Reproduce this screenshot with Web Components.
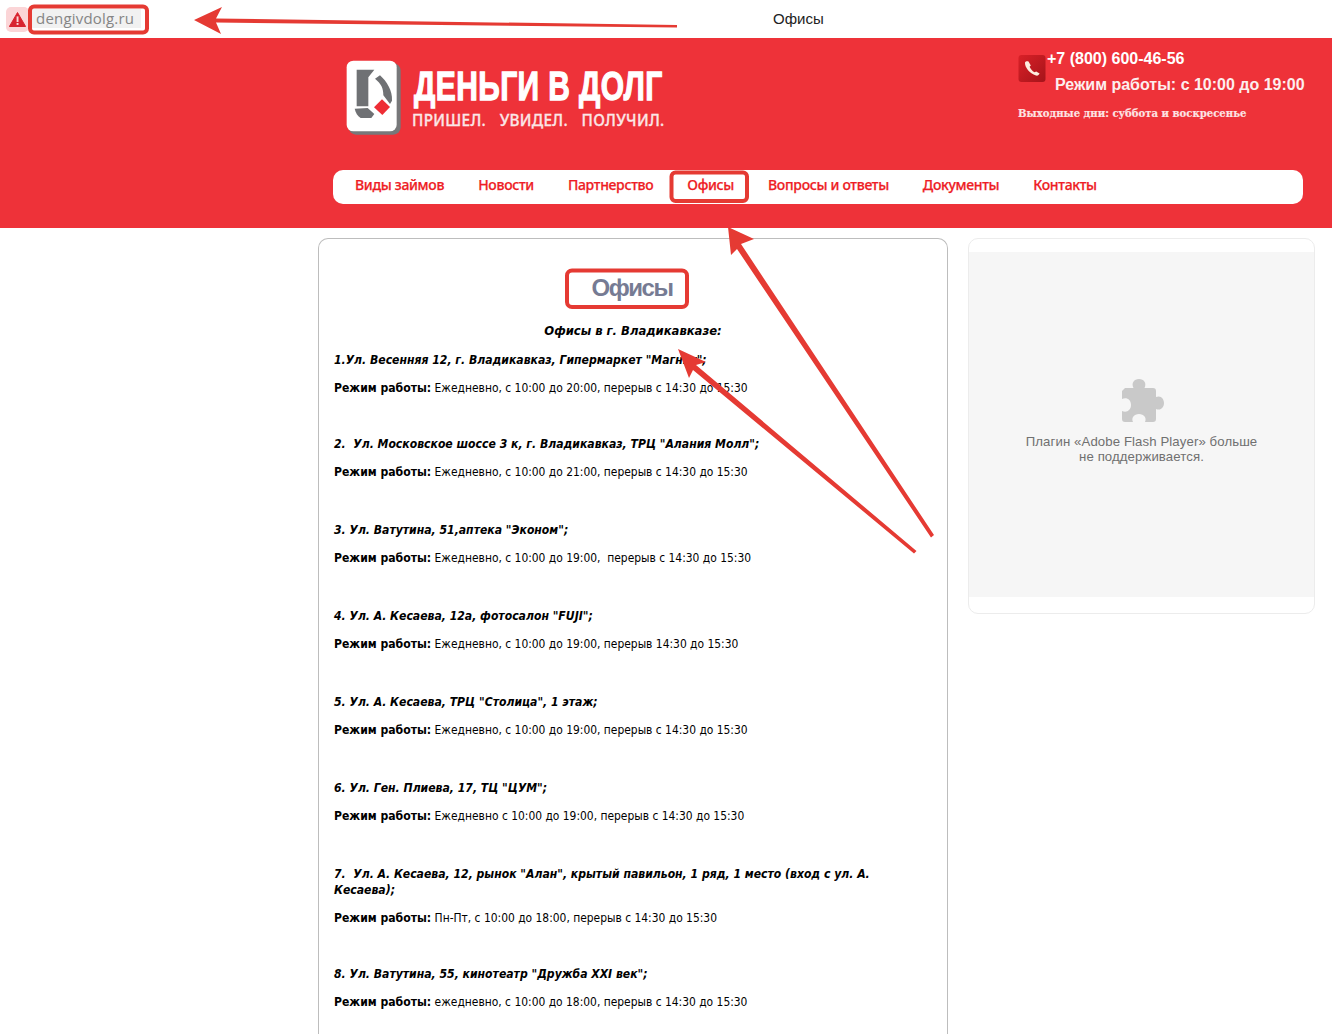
<!DOCTYPE html>
<html lang="ru">
<head>
<meta charset="utf-8">
<title>Офисы</title>
<style>
  html, body { margin: 0; height: 1034px; overflow: hidden; background: #fff; }
  body { position: relative; font-family: "DejaVu Sans", sans-serif; }
  .columns { display: flex; align-items: flex-start; gap: 20px; padding: 10px 0 0 318px; }
</style>
</head>
<body>

<template id="browser-bar-tpl">
  <style>
    :host { display: flex; align-items: center; height: 38px; background: #fff; position: relative; }
    .warn { width: 23px; height: 25px; margin: 0 0 0 6px; background: #fbd5d7; border-radius: 5px; display: flex; align-items: center; justify-content: center; }
    .url { margin: -2px 0 0 3px; width: 105px; padding-left: 4px; height: 19px; background: #f1f1f1; color: #858585; font: 15px/19px "Open Sans", sans-serif; letter-spacing: .2px; }
    .tab { position: absolute; left: 773px; top: 10px; font: 15px/18px "Liberation Sans", sans-serif; color: #222; }
  </style>
  <div class="warn"><svg width="17" height="15" viewBox="0 0 17 15"><path d="M8.5 0.5 L16.6 14.5 H0.4 Z" fill="#d8232f" stroke="#d8232f" stroke-linejoin="round"/><rect x="7.6" y="4.4" width="1.9" height="5.6" fill="#fbd5d7"/><rect x="7.6" y="11" width="1.9" height="1.9" fill="#fbd5d7"/></svg></div>
  <div class="url"><slot name="url"></slot></div>
  <div class="tab"><slot name="tab"></slot></div>
</template>

<template id="site-header-tpl">
  <style>
    :host { display: block; height: 190px; background: #ee3239; box-sizing: border-box; position: relative; }
    .top { display: flex; height: 132px; box-sizing: border-box; }
    .logo { margin: 22px 0 0 346px; display: flex; width: 672px; }
    .logo svg { display: block; }
    .brand { margin-left: 11px; color: #fff; }
    .brand b { display: block; font: 700 41px/44px "Liberation Sans Narrow", "Liberation Sans", sans-serif; transform: scaleX(.73); transform-origin: 0 0; white-space: nowrap; margin: 4px 0 0 2px; -webkit-text-stroke: 1.3px #fff; letter-spacing: .6px; }
    .brand span { display: block; font: 500 15.3px/20px "Noto Sans", sans-serif; -webkit-text-stroke: .3px #fbe6e6; word-spacing: 9.4px; margin-top: 2px; letter-spacing: .3px; color: #fbe6e6; white-space: nowrap; }
    .contacts { color: #fff; position: relative; padding-top: 11px; }
    .contacts svg { position: absolute; left: 0; top: 17px; }
    .phone { font: 700 16px/20px "Liberation Sans", sans-serif; margin-left: 29px; }
    .hours { font: 700 16px/20px "Liberation Sans", sans-serif; margin: 6px 0 0 37px; color: #fdeeee; white-space: nowrap; }
    .off { font: 700 10.1px/14px "DejaVu Serif", serif; margin-top: 12px; color: #fde3e3; white-space: nowrap; -webkit-text-stroke: .15px #fde3e3; }
    .nav-wrap { padding-left: 333px; }
  </style>
  <div class="top">
    <div class="logo">
      <svg width="55" height="75" viewBox="18 16 165 225">
        <rect x="26" y="26" width="156" height="214" rx="22" fill="#77787a"/>
        <rect x="20" y="18" width="150" height="212" rx="20" fill="#fff"/>
        <path d="M50 45 H103 L85 68 V155 H50 Z" fill="#6f7174"/>
        <path d="M120 62 C140 80 158 108 156 138 L150 148 L130 122 C130 100 124 88 105 72 Z" fill="#6f7174"/>
        <path d="M44 162 L83 160 L103 178 L94 190 H62 C52 184 47 174 44 162 Z" fill="#6f7174"/>
        <path d="M126 134 L150 157 L127 181 L102 158 Z" fill="#ee2d35"/>
      </svg>
      <div class="brand"><b>ДЕНЬГИ В ДОЛГ</b><span>ПРИШЕЛ. УВИДЕЛ. ПОЛУЧИЛ.</span></div>
    </div>
    <div class="contacts">
      <svg width="28" height="27" viewBox="0 0 28 27">
        <defs><linearGradient id="ph" x1="0" y1="0" x2="1" y2="1"><stop offset="0" stop-color="#d92027"/><stop offset="1" stop-color="#a5141a"/></linearGradient></defs>
        <rect x="0.5" width="27" height="27" rx="3" fill="url(#ph)"/>
        <path d="M7 7.5 C6.6 12 11.5 18.5 18 20.5 C19.5 21 21 20 21.6 18.6 L18.2 16.4 L16.5 17.3 C14.2 16 12.5 14 11.6 11.8 L12.8 10.4 L10.5 6.4 C9 6 7.4 6.4 7 7.5 Z" fill="#fdeee0"/>
      </svg>
      <div class="phone"><slot name="phone"></slot></div>
      <div class="hours"><slot name="hours"></slot></div>
      <div class="off"><slot name="off"></slot></div>
    </div>
  </div>
  <div class="nav-wrap"><slot name="nav"></slot></div>
</template>

<template id="main-nav-tpl">
  <style>
    :host { display: flex; box-sizing: border-box; width: 970px; height: 34px; background: #fff; border-radius: 10px; padding-left: 5px; align-items: center; }
    ::slotted(a) { padding: 0 17px 5px; font: 500 14px/28px "Noto Sans", sans-serif; -webkit-text-stroke: .25px #ee1c25; letter-spacing: -.32px; color: #ee1c25; text-decoration: none; white-space: nowrap; }
  </style>
  <slot></slot>
</template>

<template id="office-card-tpl">
  <style>
    :host { display: block; box-sizing: border-box; width: 630px; height: 796px; border: 1px solid #bdbdbd; border-bottom: 0; border-radius: 10px 10px 0 0; padding: 33px 15px 0; color: #000; overflow: hidden; }
    h1 { margin: 0; height: 51px; padding-right: 2px; text-align: center; font: 700 24px/32px "Liberation Sans", sans-serif; color: #767b93; letter-spacing: -1.5px; }
    .sub { margin: 0 0 13px; height: 16px; text-align: center; font: italic 700 12.9px/16px "DejaVu Sans Condensed", "DejaVu Sans", sans-serif; }
  </style>
  <h1><slot name="title"></slot></h1>
  <p class="sub"><slot name="subtitle"></slot></p>
  <slot></slot>
</template>

<template id="office-entry-tpl">
  <style>
    :host { display: block; padding-bottom: 28px; font: 11.92px/16px "DejaVu Sans Condensed", "DejaVu Sans", sans-serif; }
    :host([spaced]) { padding-bottom: 30px; }
    :host(:last-child) { padding-bottom: 0; }
    .addr { margin: 0 0 12px; font: italic 700 12.1px/16px "DejaVu Sans Condensed", "DejaVu Sans", sans-serif; }
    .time { margin: 0 0 12px; white-space: pre; }
    :host(:last-child) .time { margin-bottom: 0; }
    b { font: 700 12.1px/16px "DejaVu Sans Condensed", "DejaVu Sans", sans-serif; }
  </style>
  <p class="addr"><slot name="addr"></slot></p>
  <p class="time"><b>Режим работы:</b> <slot></slot></p>
</template>

<template id="flash-stub-tpl">
  <style>
    :host { display: block; box-sizing: border-box; width: 347px; height: 376px; border: 1px solid #ececec; border-radius: 10px; padding: 13px 0 16px; }
    .inner { height: 345px; background: #f6f6f6; display: flex; flex-direction: column; align-items: center; padding-top: 127px; box-sizing: border-box; }
    p { margin: 12px 0 0; width: 240px; text-align: center; font: 13.2px/15px "Liberation Sans", sans-serif; color: #707070; letter-spacing: .1px; }
    svg { display: block; margin-left: 2px; }
  </style>
  <div class="inner">
    <svg width="42" height="43" viewBox="1122 379 42 43"><path fill="#c9c9c9" d="M1125 388 H1133.5 C1131 383 1134 379 1139 379 C1144 379 1147 383 1144.5 388 H1153 a3 3 0 0 1 3 3 V397 C1161 395 1164 399 1164 403 C1164 407 1161 411 1156 409 V419 a3 3 0 0 1 -3 3 H1145 C1147 418 1144 414 1139 414 C1134 414 1131 418 1133 422 H1125 a3 3 0 0 1 -3 -3 V411 C1127 413 1131 410 1131 405 C1131 400 1127 397 1122 399 V391 Z"/></svg>
    <p><slot></slot></p>
  </div>
</template>

<template id="mark-up-tpl">
  <style>
    :host { display: block; position: absolute; left: 0; top: 0; width: 1332px; height: 1034px; pointer-events: none; }
    svg { display: block; }
  </style>
  <svg width="1332" height="1034" viewBox="0 0 1332 1034">
    <g fill="none" stroke="#e53a33" stroke-width="4">
      <rect x="30" y="6.5" width="117" height="26" rx="4"/>
      <rect x="671.5" y="172.5" width="75.5" height="28.5" rx="4"/>
      <rect x="567" y="270.5" width="120" height="36.5" rx="5"/>
    </g>
    <g fill="#e53a33">
      <path d="M194 20 L222 7 L216 18.5 L677 25 L677 27.5 L216 22.5 L221 34 Z"/>
      <path d="M728 227 L754 239 L741 244 L934 535 L931 537.5 L737 249 L731 255 Z"/>
      <path d="M678 349 L706 362 L696 365 L916.5 551 L914 553.5 L693 370 L689 378 Z"/>
    </g>
  </svg>
</template>

<script>
function tplEl(name, tplId) {
  customElements.define(name, class extends HTMLElement {
    constructor() {
      super();
      this.attachShadow({mode: 'open'});
      this.shadowRoot.appendChild(document.getElementById(tplId).content.cloneNode(true));
    }
  });
}
tplEl('browser-bar', 'browser-bar-tpl');
tplEl('site-header', 'site-header-tpl');
tplEl('main-nav', 'main-nav-tpl');
tplEl('office-card', 'office-card-tpl');
tplEl('office-entry', 'office-entry-tpl');
tplEl('flash-stub', 'flash-stub-tpl');
tplEl('mark-up', 'mark-up-tpl');
</script>

<browser-bar>
  <span slot="url">dengivdolg.ru</span>
  <span slot="tab">Офисы</span>
</browser-bar>

<site-header>
  <span slot="phone">+7 (800) 600-46-56</span>
  <span slot="hours">Режим работы: с 10:00 до 19:00</span>
  <span slot="off">Выходные дни: суббота и воскресенье</span>
  <main-nav slot="nav">
    <a href="#">Виды займов</a>
    <a href="#">Новости</a>
    <a href="#">Партнерство</a>
    <a href="#">Офисы</a>
    <a href="#">Вопросы и ответы</a>
    <a href="#">Документы</a>
    <a href="#">Контакты</a>
  </main-nav>
</site-header>

<div class="columns">
  <office-card>
    <span slot="title">Офисы</span>
    <span slot="subtitle">Офисы в г. Владикавказе:</span>
    <office-entry><span slot="addr">1.Ул. Весенняя 12, г. Владикавказ, Гипермаркет "Магнит";</span>Ежедневно, с 10:00 до 20:00, перерыв с 14:30 до 15:30</office-entry>
    <office-entry spaced><span slot="addr">2.&nbsp; Ул. Московское шоссе 3 к, г. Владикавказ, ТРЦ "Алания Молл";</span>Ежедневно, с 10:00 до 21:00, перерыв с 14:30 до 15:30</office-entry>
    <office-entry spaced><span slot="addr">3. Ул. Ватутина, 51,аптека "Эконом";</span>Ежедневно, с 10:00 до 19:00,  перерыв с 14:30 до 15:30</office-entry>
    <office-entry spaced><span slot="addr">4. Ул. А. Кесаева, 12а, фотосалон "FUJI";</span>Ежедневно, с 10:00 до 19:00, перерыв 14:30 до 15:30</office-entry>
    <office-entry spaced><span slot="addr">5. Ул. А. Кесаева, ТРЦ "Столица", 1 этаж;</span>Ежедневно, с 10:00 до 19:00, перерыв с 14:30 до 15:30</office-entry>
    <office-entry spaced><span slot="addr">6. Ул. Ген. Плиева, 17, ТЦ "ЦУМ";</span>Ежедневно с 10:00 до 19:00, перерыв с 14:30 до 15:30</office-entry>
    <office-entry><span slot="addr">7.&nbsp; Ул. А. Кесаева, 12, рынок "Алан", крытый павильон, 1 ряд, 1 место (вход с ул. А. Кесаева);</span>Пн-Пт, с 10:00 до 18:00, перерыв с 14:30 до 15:30</office-entry>
    <office-entry><span slot="addr">8. Ул. Ватутина, 55, кинотеатр "Дружба XXI век";</span>ежедневно, с 10:00 до 18:00, перерыв с 14:30 до 15:30</office-entry>
  </office-card>
  <flash-stub>Плагин «Adobe Flash Player» больше не поддерживается.</flash-stub>
</div>

<mark-up></mark-up>
</body>
</html>
